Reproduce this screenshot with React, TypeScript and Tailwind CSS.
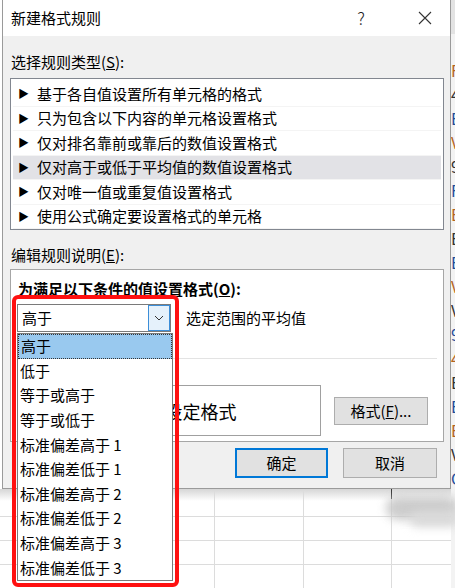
import React from "react";

// 列表中的规则类型
const ruleTypes = [
  "基于各自值设置所有单元格的格式",
  "只为包含以下内容的单元格设置格式",
  "仅对排名靠前或靠后的数值设置格式",
  "仅对高于或低于平均值的数值设置格式",
  "仅对唯一值或重复值设置格式",
  "使用公式确定要设置格式的单元格",
];

// 下拉菜单选项
const options = [
  "高于",
  "低于",
  "等于或高于",
  "等于或低于",
  "标准偏差高于 1",
  "标准偏差低于 1",
  "标准偏差高于 2",
  "标准偏差低于 2",
  "标准偏差高于 3",
  "标准偏差低于 3",
];

// 右侧露出的单元格字符
const stripChars = ["", "F", "4", "B", "V", "9", "F", "B", "B", "B", "V", "V", "9", "4", "B", "B", "B", "V", "C", "", "", "", ""];

export default function App() {
  return (
    <div className="relative w-[455px] h-[588px] overflow-hidden bg-white flex font-['Noto_Sans_CJK_SC',sans-serif] text-[15px] text-black">
      {/* 左侧：对话框 + 表格背景 */}
      <div className="w-[451px] flex flex-col">
        <div className="ml-[2px] w-[449px] h-[489px] border-l border-r border-b border-[#9a9a9a] flex flex-col">
          {/* 标题栏 */}
          <div className="h-[36px] bg-white flex items-center pl-[8px] shrink-0">
            <span className="leading-[20px] text-[15px]">新建格式规则</span>
            <span className="ml-auto w-[20px] text-center text-[17px] font-light leading-[20px] text-[#222]">?</span>
            <span className="ml-[46px] mr-[17px] w-[16px] h-[16px] flex items-center justify-center">
              <svg width="14" height="14" viewBox="0 0 14 14">
                <path d="M1 1L13 13M13 1L1 13" stroke="#333" strokeWidth="1.1" fill="none" />
              </svg>
            </span>
          </div>

          {/* 主体 */}
          <div className="flex-1 bg-[#f0f0f0] pl-[7px] pr-[6px] flex flex-col">
            <div className="mt-[16px] h-[20px] leading-[20px] pl-[1px]">
              选择规则类型(<span className="underline">S</span>):
            </div>
            <div className="mt-[6px] h-[152px] bg-white border border-[#828790] pt-[3px] px-[2px]">
              {ruleTypes.map((t, i) => (
                <div
                  key={t}
                  className={
                    "h-[24.5px] flex items-center border-b border-[#f4f4f4] " +
                    (i === 3 ? "bg-[#e2e2e6]" : "")
                  }
                >
                  <span className="ml-[5px] w-[10px] text-[11px] leading-none">▶</span>
                  <span className="ml-[9px] leading-[20px]">{t}</span>
                </div>
              ))}
            </div>

            <div className="mt-[15px] h-[20px] leading-[20px] pl-[1px]">
              编辑规则说明(<span className="underline">E</span>):
            </div>
            <div className="mt-[4px] h-[173px] bg-white border border-[#a6a6a6] flex flex-col pl-[6px] pr-[6px]">
              <div className="mt-[9px] h-[20px] leading-[20px] font-bold pl-[1px]">
                为满足以下条件的值设置格式(<span className="underline">O</span>):
              </div>
              <div className="mt-[5px] flex items-center">
                {/* 组合框 */}
                <div className="w-[154px] h-[28px] border border-[#7a7a7a] bg-white flex items-center">
                  <span className="ml-[4px] leading-[20px]">高于</span>
                  <span className="ml-auto w-[22px] h-[26px] bg-[#e5f1fb] border border-[#3c8ed8] flex items-center justify-center">
                    <svg width="10" height="6" viewBox="0 0 10 6">
                      <path d="M1 1L5 5L9 1" stroke="#333" strokeWidth="1" fill="none" />
                    </svg>
                  </span>
                </div>
                <span className="ml-[15px] leading-[20px]">选定范围的平均值</span>
              </div>
              <div className="mt-[26px] h-px bg-[#e3e3e3] ml-[1px]" />
              <div className="mt-[26px] flex items-center">
                {/* 预览标签被下拉列表挡住 */}
                <div className="w-[45px]" />
                <div className="w-[259px] h-[51px] border border-[#a0a0a0] bg-white flex items-center justify-center">
                  <span className="text-[18px] leading-[24px]">未设定格式</span>
                </div>
                <div className="ml-[13px] w-[94px] h-[28px] bg-[#e1e1e1] border border-[#adadad] flex items-center justify-center leading-[20px]">
                  格式(<span className="underline">F</span>)...
                </div>
              </div>
            </div>

            {/* 底部按钮 */}
            <div className="mt-[6px] flex justify-end pr-[7px]">
              <div className="w-[93px] h-[30px] bg-[#e1e1e1] border-2 border-[#0078d7] flex items-center justify-center leading-[20px]">
                确定
              </div>
              <div className="ml-[15px] w-[94px] h-[30px] bg-[#e1e1e1] border border-[#adadad] flex items-center justify-center leading-[20px]">
                取消
              </div>
            </div>
          </div>
        </div>

        {/* 对话框下方的表格 */}
        <div className="relative flex-1 flex flex-col">
          <div className="h-[12px] bg-gradient-to-b from-[#d6d6d6] to-white" />
          <div className="mt-[15px] h-px bg-[#dcdcdc]" />
          <div className="mt-[23px] h-px bg-[#dcdcdc]" />
          <div className="mt-[23px] h-px bg-[#dcdcdc]" />
          <div className="absolute left-[214px] top-[2px] bottom-0 w-px bg-[#dcdcdc]" />
          <div className="absolute left-[303px] top-[2px] bottom-0 w-px bg-[#dcdcdc]" />
          <div className="absolute left-[391px] top-0 h-[10px] w-px bg-[#333]" />
          <div className="absolute left-[391px] top-[10px] bottom-0 w-px bg-[#dcdcdc]" />
          {/* 水印模糊块 */}
          <div className="absolute left-[386px] top-[7px] w-[72px] h-[24px] rounded-full bg-[#c8c8c8] blur-[5px] opacity-90" />
          <div className="absolute left-[410px] top-[22px] w-[50px] h-[16px] rounded-full bg-[#dadada] blur-[5px]" />
        </div>
      </div>

      {/* 右侧露出的表格列 */}
      <div className="w-[4px] bg-[#f3f3f3] flex flex-col overflow-hidden">
        <div className="h-[34px] bg-[#e3e3e3]" />
        {stripChars.map((c, i) => (
          <div key={i} className={"h-[24px] text-[16px] leading-[24px] " + (i % 3 === 0 ? "text-[#1f4e9b]" : i % 3 === 1 ? "text-[#b5651d]" : "text-[#333]")}>
            {c}
          </div>
        ))}
      </div>

      {/* 展开的下拉列表 */}
      <div className="absolute left-[17px] top-[333px] w-[156px] h-[248px] bg-white border border-[#7a7a7a] flex flex-col">
        {options.map((o, i) => (
          <div
            key={o}
            className={
              "h-[24.6px] flex items-center pl-[2px] " +
              (i === 0 ? "bg-[#99c9ef] border border-dotted border-[#333]" : "")
            }
          >
            <span className="leading-[20px]">{o}</span>
          </div>
        ))}
      </div>

      {/* 红色标注框 */}
      <div className="absolute left-[12px] top-[295px] w-[167px] h-[292px] border-[4px] border-[#ff1010] rounded-[6px]" />
    </div>
  );
}
